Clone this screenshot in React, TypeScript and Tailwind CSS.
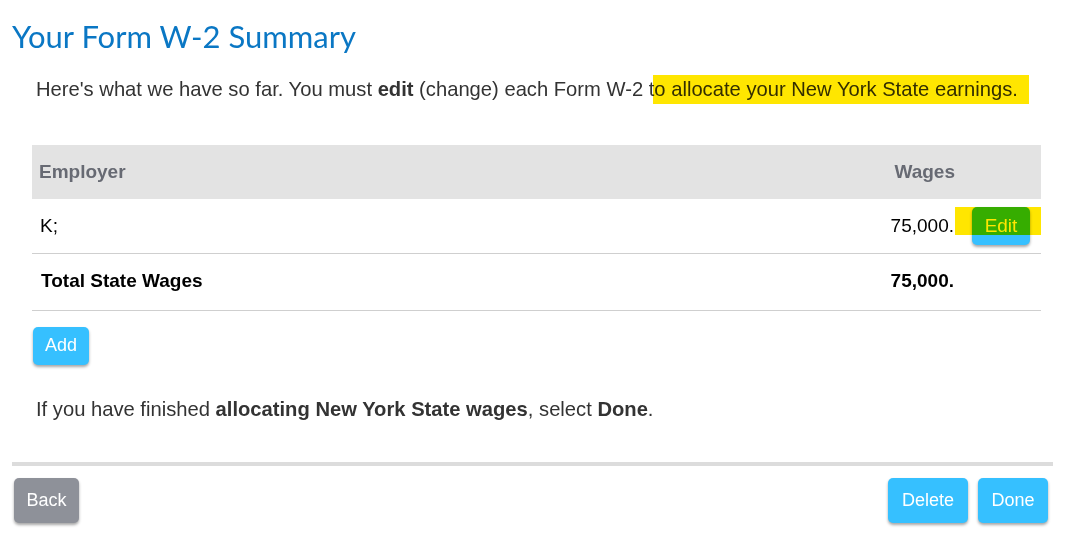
function Btn({ label, gray, className = "" }: { label: string; gray?: boolean; className?: string }) {
  return (
    <button
      type="button"
      className={`rounded-[5px] text-white shadow-[0_2px_3px_rgba(0,0,0,0.35)] ${
        gray ? "bg-[#8e9199]" : "bg-[#36c0ff]"
      } ${className}`}
    >
      {label}
    </button>
  );
}

export default function App() {
  return (
    <div className="h-[538px] w-[1079px] bg-white font-['Liberation_Sans',Arial,sans-serif]">
      <div className="pl-[12px] pr-[26px] pt-[18px]">
        <h1 className="font-['Lato','Open_Sans',sans-serif] text-[31px] leading-[36px] text-[#0a77c4]">
          Your Form W-2 Summary
        </h1>

        <p className="mt-[21px] pl-[24px] text-[20.2px] leading-[28px] text-[#333]">
          Here's what we have so far. You must <b>edit</b> (change) each Form W-2 t
          <span className="relative">
            <span className="absolute -left-[1px] -right-[11px] top-[-3px] bottom-[-4px] bg-[#ffe600] mix-blend-multiply" />
            o allocate your New York State earnings.
          </span>
        </p>

        <table className="mt-[42px] ml-[20px] w-[1009px] border-collapse text-[19px]">
          <thead>
            <tr className="h-[54px] bg-[#e3e3e3] text-[#676a73]">
              <th className="pl-[7px] text-left font-bold">Employer</th>
              <th className="w-[140px] pr-[1px] text-right font-bold">Wages</th>
              <th className="w-[85px]" />
            </tr>
          </thead>
          <tbody className="text-black">
            <tr className="h-[54px] border-b border-[#cfcfcf]">
              <td className="pl-[8px]">K;</td>
              <td className="pr-[2px] text-right">75,000.</td>
              <td className="relative">
                <div className="flex justify-end pr-[11px]">
                  <Btn label="Edit" className="h-[38px] w-[58px] text-[19px]" />
                </div>
                <span className="absolute left-[-1px] right-0 top-[8px] h-[28px] bg-[#ffe600] mix-blend-multiply" />
              </td>
            </tr>
            <tr className="h-[57px] border-b border-[#cfcfcf] font-bold">
              <td className="pl-[9px]">Total State Wages</td>
              <td className="pr-[2px] text-right">75,000.</td>
              <td />
            </tr>
          </tbody>
        </table>

        <div className="mt-[16px] pl-[21px]">
          <Btn label="Add" className="h-[38px] w-[56px] text-[18px]" />
        </div>

        <p className="mt-[30px] pl-[24px] text-[20.2px] leading-[28px] text-[#333]">
          If you have finished <b>allocating New York State wages</b>, select <b>Done</b>.
        </p>
      </div>

      <div className="mx-[12px] mt-[39px] h-[4px] w-[1041px] bg-[#dcdcdc]" />

      <div className="flex items-center justify-between pl-[14px] pr-[31px] pt-[12px]">
        <Btn label="Back" gray className="h-[45px] w-[65px] text-[18px]" />
        <div className="flex gap-[10px]">
          <Btn label="Delete" className="h-[45px] w-[80px] text-[18px]" />
          <Btn label="Done" className="h-[45px] w-[70px] text-[18px]" />
        </div>
      </div>
    </div>
  );
}
